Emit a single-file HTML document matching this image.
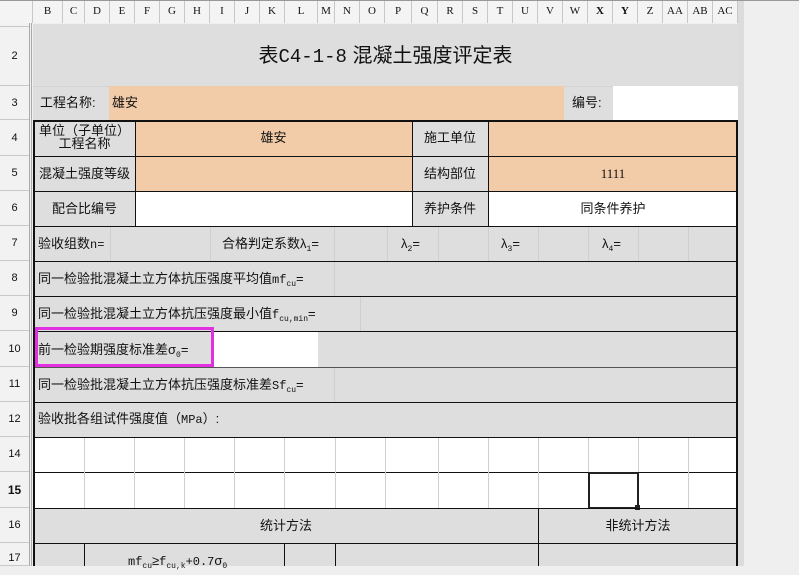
<!DOCTYPE html>
<html><head><meta charset="utf-8"><style>
*{margin:0;padding:0;box-sizing:border-box}
body{width:799px;height:566px;overflow:hidden;background:#efefef;position:relative;font-family:"Liberation Sans","Noto Sans CJK SC","WenQuanYi Zen Hei",sans-serif;font-size:13px;color:#111}
div{position:absolute}
.g{background:#dedede}
.p{background:#f2cba8}
.w{background:#fff}
.vl{width:1px;background:#cfcfcf}
.hl{height:1px;background:#cfcfcf}
.bv{width:1px;background:#111}
.bh{height:1px;background:#111}
.t{white-space:nowrap;line-height:16px}
.m{font-family:"Liberation Mono","Noto Sans CJK SC",monospace;font-size:12px}
.ch{top:0;height:23px;border-right:1px solid #c8c8c8;font-family:"Liberation Serif",serif;font-size:11px;text-align:center;line-height:23px;background:#f4f4f4}
.rh{left:0;width:29px;border-bottom:1px solid #c8c8c8;text-align:center;font-size:11px;background:#f2f2f2;font-family:"Liberation Sans",sans-serif}
sub{font-size:8px;vertical-align:-3px;font-family:"Liberation Mono",monospace}
</style></head><body>
<div style="left:0;top:0;width:738px;height:23px;background:#f4f4f4;border-bottom:1px solid #a8a8a8"></div>
<div class="ch" style="left:0;width:33px"></div>
<div class="ch" style="left:33px;width:30px">B</div>
<div class="ch" style="left:63px;width:22px">C</div>
<div class="ch" style="left:85px;width:25px">D</div>
<div class="ch" style="left:110px;width:25px">E</div>
<div class="ch" style="left:135px;width:25px">F</div>
<div class="ch" style="left:160px;width:25px">G</div>
<div class="ch" style="left:185px;width:25px">H</div>
<div class="ch" style="left:210px;width:25px">I</div>
<div class="ch" style="left:235px;width:25px">J</div>
<div class="ch" style="left:260px;width:25px">K</div>
<div class="ch" style="left:285px;width:33px">L</div>
<div class="ch" style="left:318px;width:17px">M</div>
<div class="ch" style="left:335px;width:25px">N</div>
<div class="ch" style="left:360px;width:25px">O</div>
<div class="ch" style="left:385px;width:27px">P</div>
<div class="ch" style="left:412px;width:26px">Q</div>
<div class="ch" style="left:438px;width:25px">R</div>
<div class="ch" style="left:463px;width:25px">S</div>
<div class="ch" style="left:488px;width:25px">T</div>
<div class="ch" style="left:513px;width:25px">U</div>
<div class="ch" style="left:538px;width:25px">V</div>
<div class="ch" style="left:563px;width:25px">W</div>
<div class="ch" style="left:588px;width:25px;font-weight:bold">X</div>
<div class="ch" style="left:613px;width:25px;font-weight:bold">Y</div>
<div class="ch" style="left:638px;width:25px">Z</div>
<div class="ch" style="left:663px;width:25px">AA</div>
<div class="ch" style="left:688px;width:25px">AB</div>
<div class="ch" style="left:713px;width:25px">AC</div>
<div style="left:738px;top:0;width:6px;height:566px;background:#dcdcdc"></div>
<div style="left:0;top:0;width:799px;height:1px;background:#999"></div>
<div style="left:0;top:23px;width:29px;height:543px;background:#f2f2f2"></div>
<div style="left:29px;top:23px;width:1px;height:543px;background:#aaa"></div>
<div style="left:31px;top:23px;width:1px;height:543px;background:#aaa"></div>
<div class="rh" style="top:23px;height:4px"></div>
<div class="rh" style="top:27px;height:59px;line-height:59px">2</div>
<div class="rh" style="top:86px;height:34px;line-height:34px">3</div>
<div class="rh" style="top:120px;height:36px;line-height:36px">4</div>
<div class="rh" style="top:156px;height:35px;line-height:35px">5</div>
<div class="rh" style="top:191px;height:35px;line-height:35px">6</div>
<div class="rh" style="top:226px;height:35px;line-height:35px">7</div>
<div class="rh" style="top:261px;height:35px;line-height:35px">8</div>
<div class="rh" style="top:296px;height:35px;line-height:35px">9</div>
<div class="rh" style="top:331px;height:36px;line-height:36px">10</div>
<div class="rh" style="top:367px;height:35px;line-height:35px">11</div>
<div class="rh" style="top:402px;height:35px;line-height:35px">12</div>
<div class="rh" style="top:437px;height:35px;line-height:35px">14</div>
<div class="rh" style="top:472px;height:36px;line-height:36px;font-weight:bold;font-size:12px">15</div>
<div class="rh" style="top:508px;height:35px;line-height:35px">16</div>
<div class="rh" style="top:543px;height:23px;line-height:30px">17</div>
<div class="g" style="left:33px;top:24px;width:705px;height:542px"></div>
<div class="t" style="left:33px;top:44px;width:705px;text-align:center;font-size:20px;line-height:24px">表<span style="font-family:'Liberation Mono',monospace;font-size:19px">C4-1-8</span> 混凝土强度评定表</div>
<div class="hl" style="left:33px;top:86px;width:705px;background:#d4d4d4"></div>
<div class="p" style="left:109px;top:86px;width:455px;height:34px"></div>
<div class="w" style="left:613px;top:86px;width:125px;height:34px"></div>
<div class="t" style="left:40px;top:95px">工程名称:</div>
<div class="t" style="left:112px;top:95px">雄安</div>
<div class="t" style="left:572px;top:95px">编号:</div>
<div class="p" style="left:135px;top:120px;width:603px;height:71px"></div>
<div class="g" style="left:412px;top:120px;width:76px;height:106px"></div>
<div class="w" style="left:135px;top:191px;width:277px;height:35px"></div>
<div class="w" style="left:488px;top:191px;width:250px;height:35px"></div>
<div class="t" style="left:34px;top:124px;width:101px;text-align:center;line-height:13px">单位（子单位）<br>工程名称</div>
<div class="t" style="left:135px;top:130px;width:277px;text-align:center">雄安</div>
<div class="t" style="left:412px;top:130px;width:76px;text-align:center">施工单位</div>
<div class="t" style="left:34px;top:166px;width:101px;text-align:center">混凝土强度等级</div>
<div class="t" style="left:412px;top:166px;width:76px;text-align:center">结构部位</div>
<div class="t" style="left:488px;top:166px;width:250px;text-align:center;font-family:'Liberation Serif',serif">1111</div>
<div class="t" style="left:34px;top:201px;width:101px;text-align:center">配合比编号</div>
<div class="t" style="left:412px;top:201px;width:76px;text-align:center">养护条件</div>
<div class="t" style="left:488px;top:201px;width:250px;text-align:center">同条件养护</div>
<div class="bh" style="left:34px;top:156px;width:704px"></div>
<div class="bh" style="left:34px;top:191px;width:704px"></div>
<div class="bh" style="left:34px;top:226px;width:704px"></div>
<div class="bv" style="left:135px;top:120px;height:106px"></div>
<div class="bv" style="left:412px;top:120px;height:106px"></div>
<div class="bv" style="left:488px;top:120px;height:106px"></div>
<div class="vl" style="left:110px;top:227px;height:34px"></div>
<div class="vl" style="left:210px;top:227px;height:34px"></div>
<div class="vl" style="left:334px;top:227px;height:34px"></div>
<div class="vl" style="left:387px;top:227px;height:34px"></div>
<div class="vl" style="left:438px;top:227px;height:34px"></div>
<div class="vl" style="left:488px;top:227px;height:34px"></div>
<div class="vl" style="left:538px;top:227px;height:34px"></div>
<div class="vl" style="left:588px;top:227px;height:34px"></div>
<div class="vl" style="left:638px;top:227px;height:34px"></div>
<div class="vl" style="left:688px;top:227px;height:34px"></div>
<div class="t" style="left:38px;top:236px">验收组数<span class="m">n=</span></div>
<div class="t" style="left:222px;top:236px">合格判定系数λ<sub>1</sub>=</div>
<div class="t" style="left:401px;top:236px">λ<sub>2</sub>=</div>
<div class="t" style="left:501px;top:236px">λ<sub>3</sub>=</div>
<div class="t" style="left:602px;top:236px">λ<sub>4</sub>=</div>
<div class="bh" style="left:34px;top:261px;width:704px"></div>
<div class="vl" style="left:334px;top:262px;height:34px"></div>
<div class="t" style="left:38px;top:271px">同一检验批混凝土立方体抗压强度平均值<span class="m">mf</span><sub>cu</sub>=</div>
<div class="bh" style="left:34px;top:296px;width:704px"></div>
<div class="vl" style="left:360px;top:297px;height:34px"></div>
<div class="t" style="left:38px;top:306px">同一检验批混凝土立方体抗压强度最小值<span class="m">f</span><sub>cu,min</sub>=</div>
<div class="bh" style="left:34px;top:331px;width:704px"></div>
<div class="w" style="left:213px;top:332px;width:105px;height:35px"></div>
<div class="t" style="left:38px;top:342px">前一检验期强度标准差σ<sub>0</sub>=</div>
<div style="left:35px;top:327px;width:179px;height:40px;border:3px solid #e030e0"></div>
<div class="vl" style="left:334px;top:368px;height:34px"></div>
<div class="t" style="left:38px;top:377px">同一检验批混凝土立方体抗压强度标准差<span class="m">Sf</span><sub>cu</sub>=</div>
<div class="bh" style="left:34px;top:367px;width:704px;background:#555"></div>
<div class="bh" style="left:34px;top:402px;width:704px"></div>
<div class="t" style="left:38px;top:411px">验收批各组试件强度值（<span class="m">MPa</span>）:</div>
<div class="bh" style="left:34px;top:437px;width:704px"></div>
<div class="w" style="left:34px;top:438px;width:704px;height:70px"></div>
<div class="bh" style="left:34px;top:472px;width:704px"></div>
<div class="vl" style="left:84px;top:438px;height:70px"></div>
<div class="vl" style="left:134px;top:438px;height:70px"></div>
<div class="vl" style="left:184px;top:438px;height:70px"></div>
<div class="vl" style="left:234px;top:438px;height:70px"></div>
<div class="vl" style="left:284px;top:438px;height:70px"></div>
<div class="vl" style="left:335px;top:438px;height:70px"></div>
<div class="vl" style="left:385px;top:438px;height:70px"></div>
<div class="vl" style="left:438px;top:438px;height:70px"></div>
<div class="vl" style="left:488px;top:438px;height:70px"></div>
<div class="vl" style="left:538px;top:438px;height:70px"></div>
<div class="vl" style="left:588px;top:438px;height:70px"></div>
<div class="vl" style="left:638px;top:438px;height:70px"></div>
<div class="vl" style="left:688px;top:438px;height:70px"></div>
<div style="left:588px;top:472px;width:51px;height:37px;border:2px solid #222"></div>
<div style="left:635px;top:505px;width:5px;height:5px;background:#222"></div>
<div class="bh" style="left:34px;top:508px;width:704px"></div>
<div class="t" style="left:34px;top:518px;width:504px;text-align:center">统计方法</div>
<div class="t" style="left:538px;top:518px;width:200px;text-align:center">非统计方法</div>
<div class="bv" style="left:538px;top:508px;height:58px"></div>
<div class="bh" style="left:34px;top:543px;width:704px"></div>
<div class="bv" style="left:84px;top:543px;height:23px"></div>
<div class="bv" style="left:284px;top:543px;height:23px"></div>
<div class="bv" style="left:335px;top:543px;height:23px"></div>
<div class="t" style="left:128px;top:553px"><span class="m">mf</span><sub>cu</sub>≥<span class="m">f</span><sub>cu,k</sub><span class="m">+0.7</span>σ<sub>0</sub></div>
<div style="left:33px;top:120px;width:2px;height:446px;background:#111"></div>
<div style="left:736px;top:120px;width:2px;height:446px;background:#111"></div>
<div style="left:33px;top:120px;width:705px;height:2px;background:#111"></div>
</body></html>
